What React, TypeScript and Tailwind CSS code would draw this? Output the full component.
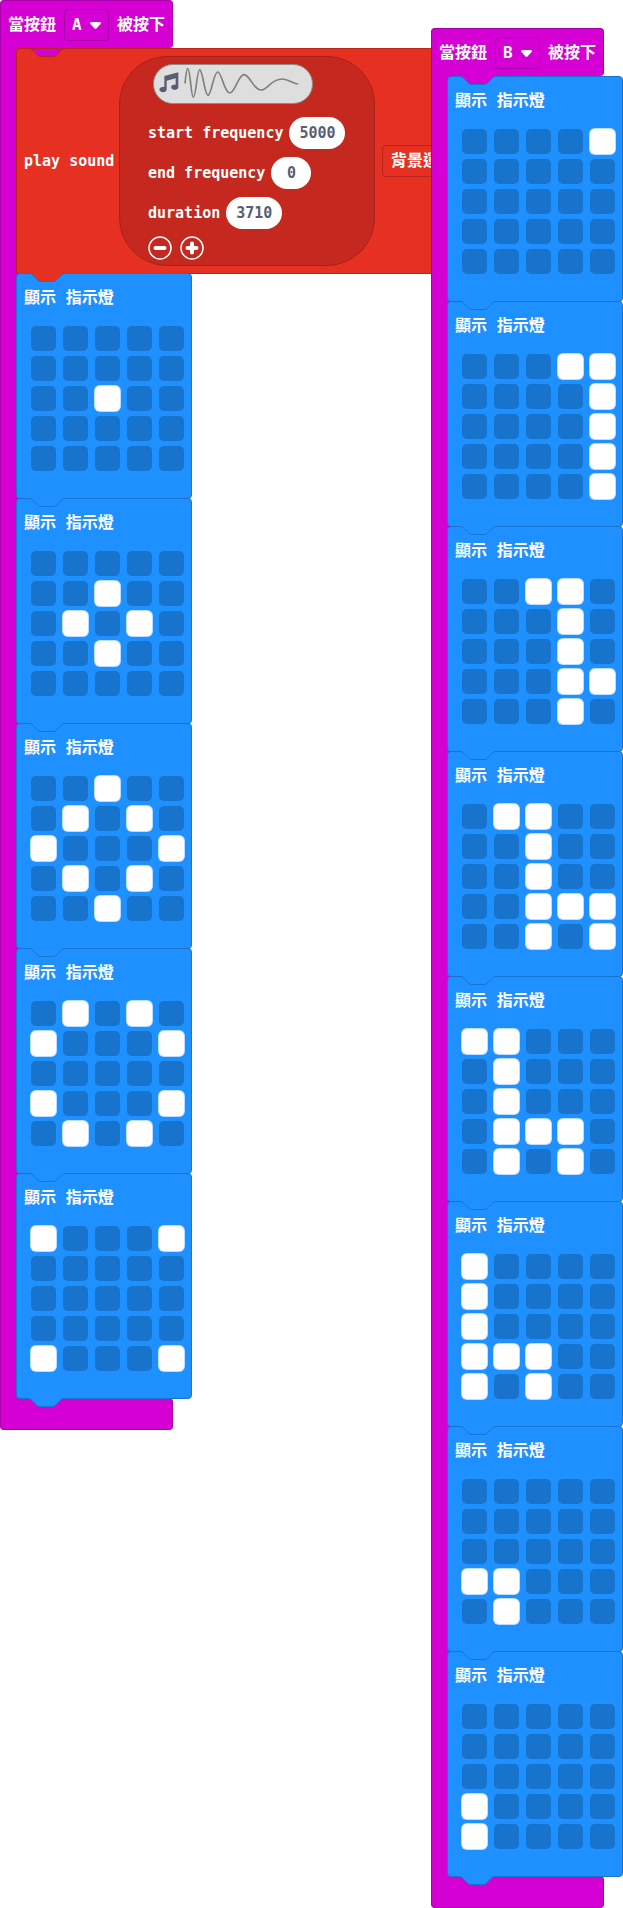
import React, { useState } from "react";

const BLUE = "#1e90ff";
const BLUE_EDGE = "#1873cc";
const RED = "#e63022";
const RED_EDGE = "#b8261b";
const MAGENTA = "#d400d4";

const leftFrames = [
  "..... ..... ..#.. ..... .....",
  "..... ..#.. .#.#. ..#.. .....",
  "..#.. .#.#. #...# .#.#. ..#..",
  ".#.#. #...# ..... #...# .#.#.",
  "#...# ..... ..... ..... #...#",
];

const rightFrames = [
  "....# ..... ..... ..... .....",
  "...## ....# ....# ....# ....#",
  "..##. ...#. ...#. ...## ...#.",
  ".##.. ..#.. ..#.. ..### ..#.#",
  "##... .#... .#... .###. .#.#.",
  "#.... #.... #.... ###.. #.#..",
  "..... ..... ..... ##... .#...",
  "..... ..... ..... #.... #....",
];

function Notch({ fill, edge, className }: { fill: string; edge: string; className: string }) {
  return (
    <svg className={`absolute left-3 ${className}`} width="36" height="10" viewBox="0 0 36 10" aria-hidden="true">
      <path d="M0 0V.5C2 .5 3 1.5 4 2.5l4 4c1 1 2 2 4 2h12c2 0 3-1 4-2l4-4c1-1 2-2 4-2V0z" fill={fill} />
      <path d="M0 .5c2 0 3 1 4 2l4 4c1 1 2 2 4 2h12c2 0 3-1 4-2l4-4c1-1 2-2 4-2" fill="none" stroke={edge} />
    </svg>
  );
}

function LedBlock({ frame, above }: { frame: string; above: string }) {
  const [leds, setLeds] = useState(frame.replace(/ /g, "").split("").map((c) => c === "#"));
  return (
    <section className="relative -mb-px w-44 rounded border border-[#1873cc] bg-[#1e90ff] pt-3 pb-[27px]">
      <Notch fill={above} edge={BLUE_EDGE} className="-top-px" />
      <h2 className="px-[7px] text-[16px] leading-6 font-bold whitespace-pre">顯示 指示燈</h2>
      <div className="mt-4 grid grid-cols-[repeat(5,25px)] gap-x-[7px] gap-y-[5px] pl-3.5">
        {leds.map((on, i) => (
          <button
            key={i}
            type="button"
            aria-label={`LED ${i + 1}`}
            aria-pressed={on}
            onClick={() => setLeds(leds.map((v, j) => (j === i ? !v : v)))}
            className={
              on
                ? "h-[25px] rounded-[5px] bg-white ring-1 ring-white/70"
                : "h-[25px] rounded-[5px] bg-[#1873cc]"
            }
          />
        ))}
      </div>
    </section>
  );
}

function Hat({ button, children }: { button: string; children: React.ReactNode }) {
  return (
    <div className="relative">
      <header className="flex h-12 w-[173px] items-center gap-2 rounded rounded-bl-none border border-b-0 border-[#aa00aa] bg-[#d400d4] px-[7px] text-[16px] font-bold whitespace-nowrap">
        <span>當按鈕</span>
        <span className="relative block h-8 w-[45px] shrink-0">
          <select
            aria-label="按鈕"
            defaultValue={button}
            className="h-full w-full appearance-none rounded border border-[#aa00aa] bg-[#d400d4] pl-[7px] font-bold"
          >
            <option>A</option>
            <option>B</option>
            <option>A+B</option>
          </select>
          <svg className="pointer-events-none absolute top-[13px] right-2" width="11" height="7" viewBox="0 0 11 7" aria-hidden="true">
            <path d="M1.5 0h8c1.300 0 1.900 1.300 1.100 2.100L6.700 6.300c-.7.700-1.700.7-2.400 0L.4 2.100C-.4 1.300.2 0 1.500 0z" fill="#fff" />
          </svg>
        </span>
        <span>被按下</span>
      </header>
      <div className="flex">
        <div className="-mr-1 w-5 shrink-0 border-l border-[#aa00aa] bg-[#d400d4]" />
        <div className="relative z-10 min-w-0 flex-1">
          {children}
          <Notch fill={BLUE} edge={BLUE_EDGE} className="top-full" />
        </div>
      </div>
      <footer className="h-8 w-[173px] rounded rounded-tl-none border border-t-0 border-[#aa00aa] bg-[#d400d4]" />
    </div>
  );
}

function Param({ label, value, width }: { label: string; value: string; width: string }) {
  return (
    <label className="flex h-8 items-center gap-1.5 whitespace-nowrap">
      {label}
      <input
        defaultValue={value}
        className={`h-8 rounded-full bg-white text-center font-bold text-[#575e75] ${width}`}
      />
    </label>
  );
}

function SoundBlock() {
  return (
    <section className="relative -mb-px flex items-center overflow-hidden rounded-l border border-r-0 border-[#b8261b] bg-[#e63022] py-[7px] pl-[7px]">
      <Notch fill={MAGENTA} edge={RED_EDGE} className="-top-px" />
      <span className="w-[95px] shrink-0 text-[15px] font-bold whitespace-nowrap">play sound</span>
      <div className="flex h-[210px] w-64 shrink-0 flex-col rounded-[48px] border border-[#a8221a] bg-[#c4281e] pt-[7px] pl-7 text-[15px] font-bold">
        <button type="button" aria-label="sound editor" className="ml-[5px] h-10 w-40">
          <svg width="160" height="40" viewBox="131 71 480 120" aria-hidden="true">
            <rect x="132.5" y="72.5" width="477" height="117" rx="58" fill="#dedede" stroke="#8c8c8c" strokeWidth="3" />
            <path d="M165 107 207 96V139A11 8 0 1 1 199 133V114L172 121V146A11 8 0 1 1 165 140z" fill="#575e75" />
            <path
              d="M227 129C230 100 232 85 235 85C243 85 245 171 252 171C260 171 263 88 271 88C280 88 286 165 296 165C306 165 313 95 325 95C337 95 345 158 361 158C377 158 387 103 404 103C422 103 432 149 455 149C475 149 485 116 518 116C540 116 550 131 567 131"
              fill="none"
              stroke="#808080"
              strokeWidth="5"
            />
          </svg>
        </button>
        <div className="mt-[13px] flex flex-col gap-2">
          <Param label="start frequency" value="5000" width="w-14" />
          <Param label="end frequency" value="0" width="w-10" />
          <Param label="duration" value="3710" width="w-14" />
        </div>
        <div className="mt-[7px] flex gap-2">
          <button type="button" aria-label="collapse">
            <svg width="24" height="24" viewBox="0 0 24 24" fill="none" stroke="#fff" aria-hidden="true">
              <circle cx="12" cy="12" r="11" strokeWidth="1.5" />
              <path d="M7.5 12h9" strokeWidth="4" strokeLinecap="round" />
            </svg>
          </button>
          <button type="button" aria-label="expand">
            <svg width="24" height="24" viewBox="0 0 24 24" fill="none" stroke="#fff" aria-hidden="true">
              <circle cx="12" cy="12" r="11" strokeWidth="1.5" />
              <path d="M7.500 12h9M12 7.500v9" strokeWidth="4" strokeLinecap="round" />
            </svg>
          </button>
        </div>
      </div>
      <select
        aria-label="播放模式"
        className="ml-[7px] h-8 w-36 shrink-0 appearance-none rounded border border-[#b8261b] bg-[#e63022] pl-2 text-[16px] font-bold"
      >
        <option>背景運行</option>
      </select>
    </section>
  );
}

export default function App() {
  return (
    <main className="flex w-full items-start bg-white font-['DejaVu_Sans_Mono','Noto_Sans_CJK_TC',monospace] text-white">
      <div className="min-w-0 flex-1">
        <Hat button="A">
          <SoundBlock />
          {leftFrames.map((f, i) => (
            <LedBlock key={i} frame={f} above={i === 0 ? RED : BLUE} />
          ))}
        </Hat>
      </div>
      <div className="relative z-20 mt-7 w-48 shrink-0">
        <Hat button="B">
          {rightFrames.map((f, i) => (
            <LedBlock key={i} frame={f} above={i === 0 ? MAGENTA : BLUE} />
          ))}
        </Hat>
      </div>
    </main>
  );
}
